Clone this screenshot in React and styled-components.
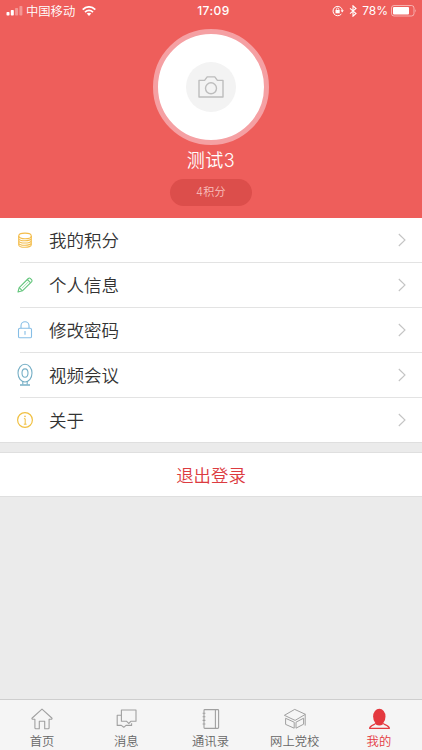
import React from 'react';
import styled, { createGlobalStyle } from 'styled-components';

const menuItems = [
    { label: '我的积分', icon: CoinsIcon },
    { label: '个人信息', icon: PencilIcon },
    { label: '修改密码', icon: LockIcon },
    { label: '视频会议', icon: WebcamIcon },
    { label: '关于', icon: InfoIcon }
];

const tabs = [
    { label: '首页', icon: HomeIcon },
    { label: '消息', icon: MessagesIcon },
    { label: '通讯录', icon: ContactsIcon },
    { label: '网上党校', icon: SchoolIcon },
    { label: '我的', icon: ProfileIcon, active: true }
];

export default function App() {
    return (
        <StyledPage>
            <GlobalStyle />
            <StyledHeader>
                <StatusBar />
                <StyledAvatar>
                    <StyledAvatarInner>
                        <CameraIcon />
                    </StyledAvatarInner>
                </StyledAvatar>
                <StyledName>测试3</StyledName>
                <StyledPoints>4积分</StyledPoints>
            </StyledHeader>
            <StyledMenu>
                {
                    menuItems.map(({ label, icon: Icon }) => {
                        return (
                            <StyledMenuItem key={label}>
                                <StyledMenuIcon><Icon /></StyledMenuIcon>
                                <StyledMenuLabel>{label}</StyledMenuLabel>
                                <ChevronIcon />
                            </StyledMenuItem>
                        );
                    })
                }
            </StyledMenu>
            <StyledLogout>退出登录</StyledLogout>
            <StyledTabBar>
                {
                    tabs.map(({ label, icon: Icon, active }) => {
                        return (
                            <StyledTab key={label} $active={active}>
                                <Icon />
                                <StyledTabLabel>{label}</StyledTabLabel>
                            </StyledTab>
                        );
                    })
                }
            </StyledTabBar>
        </StyledPage>
    );
}

function StatusBar() {
    return (
        <StyledStatusBar>
            <StyledCarrier>
                <svg width="17" height="10" viewBox="0 0 17 10" fill="#fff">
                    <rect x="0.5" y="6" width="3" height="3.5" rx="0.7" />
                    <rect x="4.8" y="4" width="3" height="5.5" rx="0.7" />
                    <rect x="9.1" y="2" width="3" height="7.5" rx="0.7" opacity="0.35" />
                    <rect x="13.4" y="0" width="3" height="9.5" rx="0.7" opacity="0.35" />
                </svg>
                <StyledCarrierName>中国移动</StyledCarrierName>
                <svg width="14" height="10" viewBox="0 0 14 10" fill="none" stroke="#fff" strokeWidth="1.8">
                    <path d="M0.7 3.6Q7 -1.8 13.3 3.6" />
                    <path d="M3 6.1Q7 2.7 11 6.1" />
                    <path d="M4.7 7.6Q7 5.8 9.3 7.6L7 10Z" fill="#fff" stroke="none" />
                </svg>
            </StyledCarrier>
            <StyledTime>17:09</StyledTime>
            <StyledBattery>
                <svg width="12" height="12" viewBox="0 0 12 12" fill="none" stroke="#fff" strokeWidth="1">
                    <path d="M9.4 9A4.7 4.7 0 1 1 10.4 5.5" />
                    <path d="M8.6 5.2h3.2l-1.6 2.2z" fill="#fff" stroke="none" />
                    <rect x="3.5" y="5" width="4.2" height="3.3" fill="#fff" stroke="none" />
                    <path d="M4.4 5.2V4.2a1.2 1.2 0 0 1 2.4 0v1" strokeWidth="0.8" />
                </svg>
                <svg width="8" height="12" viewBox="0 0 8 12" fill="none" stroke="#fff" strokeWidth="1.1">
                    <path d="M1 3.3L7 8.5L4 11.2V0.8L7 3.5L1 8.7" />
                </svg>
                <StyledPercent>78%</StyledPercent>
                <svg width="26" height="12" viewBox="0 0 26 12">
                    <rect x="0.5" y="0.5" width="22.5" height="10.5" rx="2.5" fill="none" stroke="#fff" opacity="0.5" />
                    <rect x="2" y="2" width="16" height="7.5" rx="1" fill="#fff" />
                    <path d="M24.2 4q1.6 1.8 0 3.6z" fill="#fff" opacity="0.5" />
                </svg>
            </StyledBattery>
        </StyledStatusBar>
    );
}

function CameraIcon() {
    return (
        <svg width="26" height="22" viewBox="0 0 26 22" fill="none" stroke="#bdbdbd" strokeWidth="1.4">
            <path d="M1 4.4H6.6L9.2 0.9H16.8L19.4 4.4H25V21H1Z" strokeLinejoin="round" />
            <circle cx="13" cy="12.3" r="5.5" />
        </svg>
    );
}

function CoinsIcon() {
    return (
        <svg width="16" height="16" viewBox="0 0 16 16" fill="none" stroke="#f4bd4b" strokeWidth="1.1">
            <ellipse cx="8" cy="3.9" rx="6.3" ry="2.8" />
            <path d="M1.7 3.9v2.3c0 3.4 12.6 3.4 12.6 0V3.9M1.7 6.2v2.3c0 3.4 12.6 3.4 12.6 0V6.2M1.7 8.5v2.2c0 3.4 12.6 3.4 12.6 0V8.5M1.7 10.7v2c0 3.4 12.6 3.4 12.6 0v-2" />
        </svg>
    );
}

function PencilIcon() {
    return (
        <svg width="16" height="16" viewBox="0 0 16 16" fill="none" stroke="#62c57b" strokeWidth="1.1" strokeLinejoin="round">
            <path d="M1 15L2.2 10.6L11.3 1.5Q12.4 0.5 13.5 1.6L14.5 2.6Q15.5 3.7 14.5 4.8L5.4 13.8Z" />
            <path d="M2.2 10.6L5.4 13.8M10.3 2.5L13.5 5.7" />
            <path d="M5 11.2L11.2 5" strokeWidth="0.6" />
        </svg>
    );
}

function LockIcon() {
    return (
        <svg width="16" height="18" viewBox="0 0 16 18" fill="none" stroke="#86bee6" strokeWidth="1.1">
            <rect x="1.5" y="7.2" width="13" height="9.6" rx="1.4" />
            <path d="M4 7.2V4.7a4 4 0 0 1 8 0v2.5M8 10v3.8" />
        </svg>
    );
}

function WebcamIcon() {
    return (
        <svg width="16" height="24" viewBox="0 0 16 24" fill="none" stroke="#76afc6" strokeWidth="1.1">
            <ellipse cx="8" cy="10.1" rx="7" ry="8.9" />
            <ellipse cx="8" cy="10.1" rx="3" ry="4.2" />
            <path d="M5.8 18.7V21.6M10.2 18.7V21.6" />
            <path d="M3 22H13" strokeWidth="1.5" />
        </svg>
    );
}

function InfoIcon() {
    return (
        <svg width="16" height="16" viewBox="0 0 16 16" fill="none" stroke="#f0c043" strokeWidth="1.2">
            <circle cx="8" cy="8" r="7.4" />
            <path d="M6.9 6.7H8.2V12.2M6.8 12.2H9.6" strokeWidth="1" />
            <circle cx="8" cy="4.4" r="0.8" fill="#f0c043" stroke="none" />
        </svg>
    );
}

function ChevronIcon() {
    return (
        <svg width="8" height="14" viewBox="0 0 8 14" fill="none" stroke="#c4c4c4" strokeWidth="1.1">
            <path d="M0.8 1L7 7L0.8 13" />
        </svg>
    );
}

function HomeIcon() {
    return (
        <svg width="24" height="24" viewBox="0 0 24 24" fill="none" stroke="#a0a0a0" strokeWidth="1.1" strokeLinejoin="round">
            <path d="M4.9 12.2H2.2Q1.6 11.6 2.2 11L12 2.1L21.8 11Q22.4 11.6 21.8 12.2H19.1V20.8Q19.1 21.8 18.1 21.8H14.7V14.2H9.3V21.8H5.9Q4.9 21.8 4.9 20.8Z" />
        </svg>
    );
}

function MessagesIcon() {
    return (
        <svg width="24" height="24" viewBox="0 0 24 24" fill="none" stroke="#a0a0a0" strokeWidth="1.1" strokeLinejoin="round">
            <path d="M7.4 3H22V14.3H16.8L14.7 16.5L12.7 14.3H7.4V3Z" />
            <path d="M7.4 8.2H3.2V18.4H7.3L9.8 20.3L12 18.4H17.6V16.3" />
        </svg>
    );
}

function ContactsIcon() {
    return (
        <svg width="24" height="24" viewBox="0 0 24 24" fill="none" stroke="#a0a0a0" strokeWidth="1.1">
            <rect x="5" y="2.6" width="14.6" height="18.8" rx="0.8" />
            <path d="M16.4 2.6V21.4M3.6 6.2H6.4M3.6 9.8H6.4M3.6 13.4H6.4M3.6 17H6.4" />
        </svg>
    );
}

function SchoolIcon() {
    return (
        <svg width="24" height="24" viewBox="0 0 24 24" fill="none" stroke="#a0a0a0" strokeWidth="1" strokeLinejoin="round">
            <path d="M1.4 8.3L11.7 2.4L22.4 7.3L12.1 13.4Z" />
            <path d="M2.6 11.3V17.4L11.2 21.2V15.2ZM13 15.2L20.6 11.2V17.2L13 21.2ZM22.2 7.4V18.6" />
        </svg>
    );
}

function ProfileIcon() {
    return (
        <svg width="24" height="24" viewBox="0 0 24 24">
            <path d="M9.4 15.8C9.2 17.4 2.9 18.2 2.6 21.3H22.4C22.1 18.2 15.6 17.4 15.4 15.8" fill="none" stroke="#e4393f" strokeWidth="1.2" strokeLinejoin="round" />
            <ellipse cx="12.3" cy="9.6" rx="6.2" ry="7.9" fill="#e4393f" />
            <path d="M9.2 14.5H15.4L15.8 17.4Q12.3 19.6 8.8 17.4Z" fill="#e4393f" />
        </svg>
    );
}

const GlobalStyle = createGlobalStyle`
    body {
        margin: 0;
        background: #ebebeb;
        font-family: "Noto Sans CJK SC", sans-serif;
        font-weight: 350;
    }

    svg {
        display: block;
        flex-shrink: 0;
    }
`;

const StyledPage = styled.div`
    display: flex;
    flex-direction: column;
    height: 750px;
    overflow: hidden;
    background: #ebebeb;
`;

const StyledHeader = styled.header`
    display: flex;
    flex-direction: column;
    align-items: center;
    flex-shrink: 0;
    height: 218px;
    background: #ee5e5b;
    color: #fff;
`;

const StyledStatusBar = styled.div`
    display: grid;
    grid-template-columns: 1fr auto 1fr;
    align-items: center;
    width: 100%;
    height: 22px;
    box-sizing: border-box;
    padding: 0 5px 0 6px;
    font-size: 12.3px;
    line-height: 22px;
`;

const StyledCarrier = styled.div`
    display: flex;
    align-items: center;
`;

const StyledCarrierName = styled.span`
    margin: 0 7px 0 3px;
`;

const StyledTime = styled.span`
    font-family: Inter, sans-serif;
    font-weight: 500;
    font-size: 12px;
    letter-spacing: 0.45px;
    margin-left: 4px;
`;

const StyledBattery = styled.div`
    display: flex;
    align-items: center;
    justify-content: flex-end;
    gap: 5px;
`;

const StyledPercent = styled.span`
    font-family: Inter, sans-serif;
    font-weight: 400;
    font-size: 12px;
    margin-right: -2px;
`;

const StyledAvatar = styled.div`
    display: flex;
    align-items: center;
    justify-content: center;
    flex-shrink: 0;
    width: 106px;
    height: 106px;
    margin-top: 7px;
    border: 5px solid #f5a0a3;
    border-radius: 50%;
    background: #fff;
`;

const StyledAvatarInner = styled.div`
    display: flex;
    align-items: center;
    justify-content: center;
    width: 50px;
    height: 50px;
    margin-bottom: 1px;
    border-radius: 50%;
    background: #f3f3f3;
`;

const StyledName = styled.div`
    margin-top: 4px;
    font-family: Inter, "Noto Sans CJK SC", sans-serif;
    font-size: 18px;
    line-height: 24px;
    letter-spacing: 0.5px;
`;

const StyledPoints = styled.div`
    width: 82px;
    height: 27px;
    margin-top: 6px;
    border-radius: 14px;
    background: #dc4e4b;
    color: #f9c0bd;
    font-family: Inter, "Noto Sans CJK SC", sans-serif;
    font-size: 11px;
    line-height: 27px;
    letter-spacing: 0.3px;
    text-align: center;
`;

const StyledMenu = styled.ul`
    flex-shrink: 0;
    margin: 0;
    padding: 0;
    list-style: none;
    background: #fff;
    border-bottom: 1px solid #dfdfdf;
`;

const StyledMenuItem = styled.li`
    display: flex;
    align-items: center;
    box-sizing: border-box;
    height: 45px;
    padding: 0 16px 1px 17px;
    background: linear-gradient(#e3e3e3, #e3e3e3) 20px 100% / 100% 1px no-repeat;

    &:last-child {
        height: 44px;
        background: none;
    }
`;

const StyledMenuIcon = styled.span`
    display: flex;
    justify-content: center;
    width: 16px;
    margin-right: 16px;
`;

const StyledMenuLabel = styled.span`
    flex: 1;
    color: #333;
    font-size: 17.5px;
    line-height: 24px;
`;

const StyledLogout = styled.button`
    flex-shrink: 0;
    height: 45px;
    margin: 9px 0 0;
    padding: 0;
    border: solid #dfdfdf;
    border-width: 1px 0;
    background: #fff;
    color: #dc3b40;
    font-family: inherit;
    font-weight: inherit;
    font-size: 17.4px;
    line-height: 43px;
`;

const StyledTabBar = styled.nav`
    display: flex;
    flex-shrink: 0;
    height: 50px;
    margin-top: auto;
    padding-right: 1px;
    border-top: 1px solid #cecece;
    background: #f5f5f5;
`;

const StyledTab = styled.div`
    display: flex;
    flex: 1 1 0;
    flex-direction: column;
    align-items: center;
    padding-top: 7px;
    color: ${props => props.$active ? '#e4393f' : '#666'};
`;

const StyledTabLabel = styled.span`
    margin-top: 1px;
    font-size: 12.3px;
    line-height: 18px;
    white-space: nowrap;
`;
